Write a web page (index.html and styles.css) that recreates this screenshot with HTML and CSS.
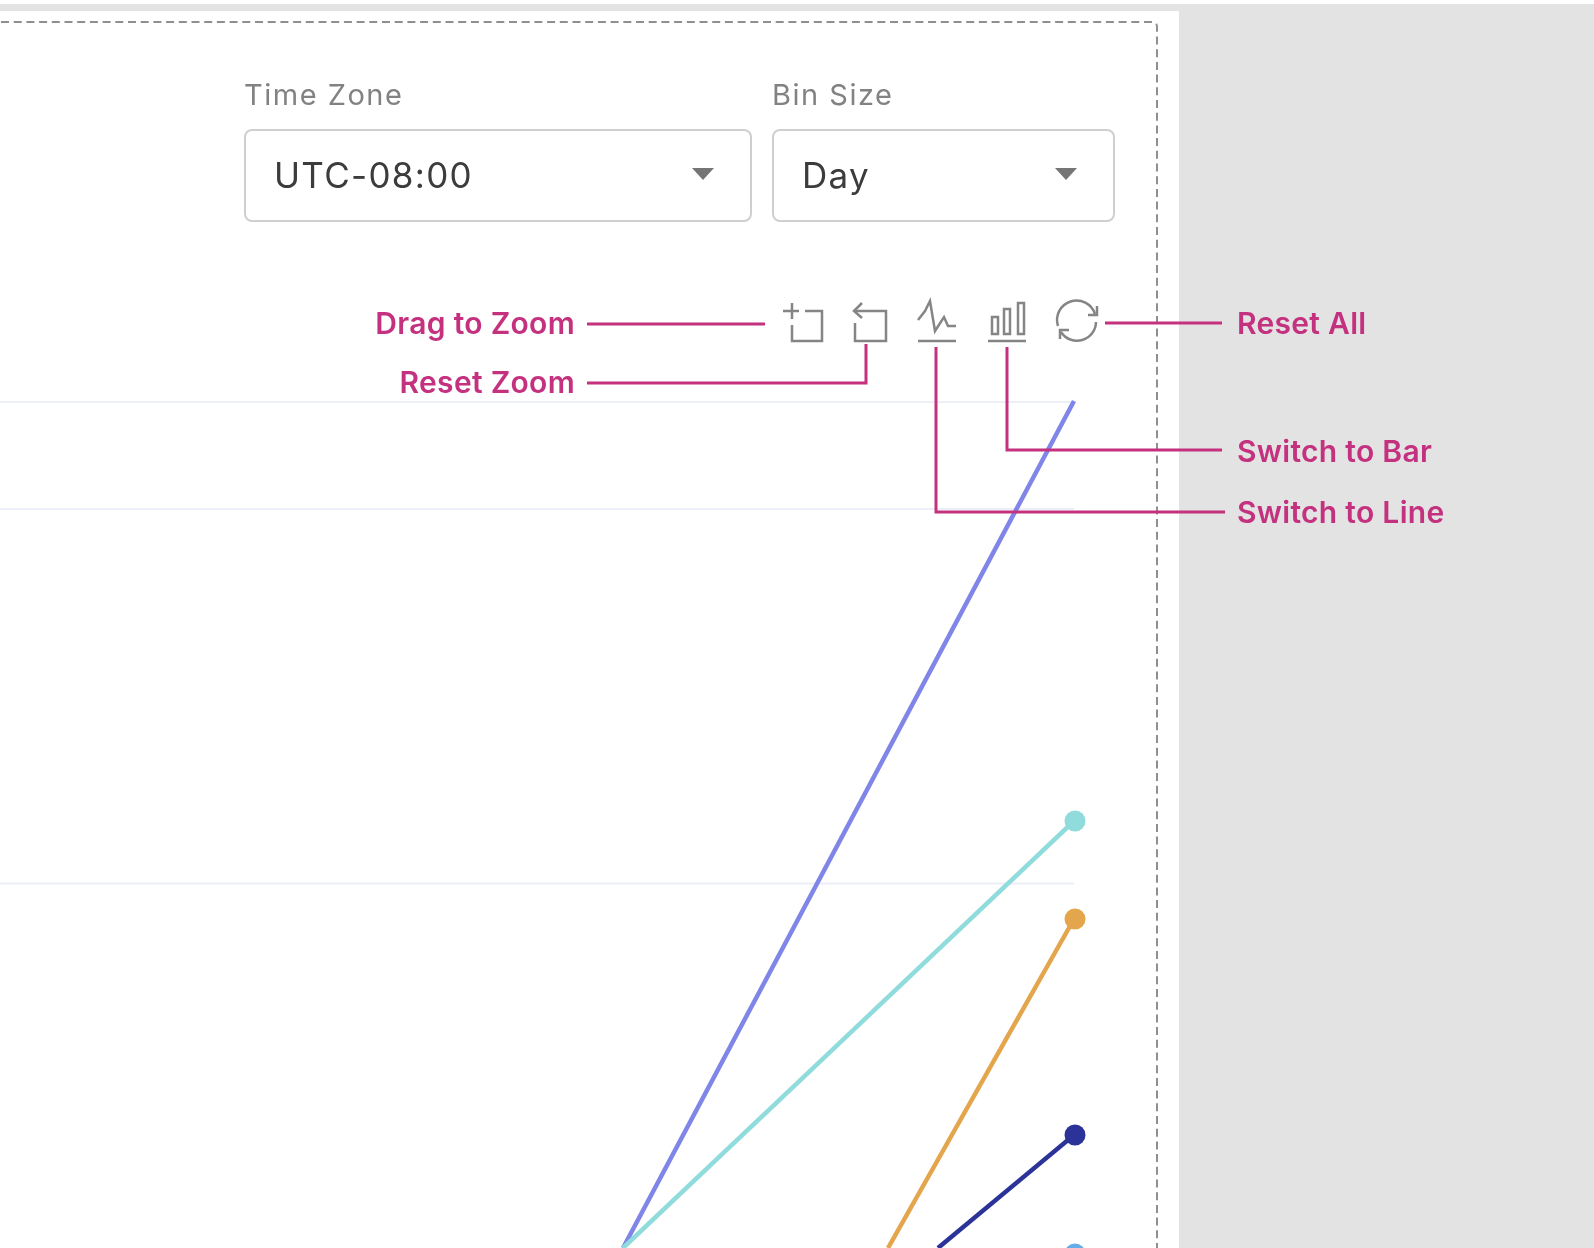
FILE: index.html
```html
<html>
    <head>
        <link rel="stylesheet" href="styles.css">
    </head>

    <body>
        <div class="topbar"></div>
        <div class="page">
            <div class="panel">
                <div class="filters">
                    <div class="field field-zone">
                        <div class="field-label">Time Zone</div>
                        <div class="select"><span>UTC-08:00</span><i class="caret"></i></div>
                    </div>
                    <div class="field field-bin">
                        <div class="field-label">Bin Size</div>
                        <div class="select"><span>Day</span><i class="caret"></i></div>
                    </div>
                </div>
            </div>
            <div class="side"></div>
        </div>

        <!-- chart and callout lines, page coordinates -->
        <svg class="chart" width="1594" height="1248" viewBox="0 0 1594 1248">
            <path class="dashes" d="M1 22H1152Q1157 22 1157 27V1248"/>

            <g stroke="#eceef8" stroke-width="2" fill="none">
                <path d="M0 402H1074"/>
                <path d="M0 509H1074"/>
                <path d="M0 883.500H1074"/>
            </g>

            <g fill="none" stroke-width="4.500">
                <path d="M623 1248L1074 401" stroke="#8085e8"/>
                <path d="M623 1248L1074 821" stroke="#90dbdc"/>
                <path d="M888 1248L1074 919" stroke="#e4a64c"/>
                <path d="M938 1248L1074 1135" stroke="#2b3298"/>
            </g>
            <circle cx="1075" cy="821" r="10.500" fill="#90dbdc"/>
            <circle cx="1075" cy="919" r="10.500" fill="#e4a64c"/>
            <circle cx="1075" cy="1135" r="10.500" fill="#2b3298"/>
            <circle cx="1075" cy="1254" r="10.500" fill="#66ade8"/>

            <g class="icon">
                <path d="M783 311H799M792 303V319"/>
                <path d="M805 311H822V341H792V325"/>
            </g>
            <g class="icon">
                <path d="M855 311H886V341H855V323"/>
                <path d="M862 303L854 311L862 318"/>
            </g>
            <g class="icon">
                <path d="M918 320L925 311L930 301L935 331L944 317L948 326H956"/>
                <path d="M918 341H956"/>
            </g>
            <g class="icon">
                <rect x="992" y="317" width="6" height="17"/>
                <rect x="1004" y="309" width="6" height="25"/>
                <rect x="1018" y="303" width="6" height="31"/>
                <path d="M988 341H1026"/>
            </g>
            <g class="icon">
                <path d="M1058 326A19 19 0 0 1 1095 314"/>
                <path d="M1096 322A19 19 0 0 1 1061 332"/>
                <path d="M1097 306V315H1088M1060 339V330H1069"/>
            </g>

            <g fill="none" stroke="#c4317f" stroke-width="3">
                <path d="M587 324H765"/>
                <path d="M587 383H866V344"/>
                <path d="M936 347V512H1225"/>
                <path d="M1007 347V450H1222"/>
                <path d="M1105 323H1222"/>
            </g>
        </svg>

        <div class="notes">
            <span class="note note-drag">Drag to Zoom</span>
            <span class="note note-reset">Reset Zoom</span>
            <span class="note note-all">Reset All</span>
            <span class="note note-bar">Switch to Bar</span>
            <span class="note note-line">Switch to Line</span>
        </div>
    </body>
</html>
```

FILE: styles.css
```css
html, body {
    margin: 0;
    height: 1248px;
    overflow: hidden;
    background-color: white;
    font-family: Inter, "Liberation Sans", sans-serif;
}
/* the reference is a soft, upscaled capture */
body {
    filter: blur(0.6px);
}
.topbar {
    height: 7px;
    margin-top: 4px;
    background-color: #e3e3e3;
}
.page {
    display: flex;
    height: 1237px;
}
.panel {
    width: 1179px;
    padding: 70px 0 0 244px;
    box-sizing: border-box;
    background-color: white;
}
.side {
    flex: 1;
    background-color: #e3e3e3;
}
.filters {
    display: flex;
    gap: 20px;
}
.field-zone {
    width: 508px;
}
.field-bin {
    width: 343px;
}
.field-label {
    font-size: 29px;
    line-height: 28px;
    letter-spacing: 1.500px;
    color: #828282;
    margin-bottom: 20px;
}
.select {
    height: 93px;
    box-sizing: border-box;
    border: 2px solid #cfcfcf;
    border-radius: 8px;
    padding: 0 36px 2px 28px;
    display: flex;
    align-items: center;
    justify-content: space-between;
    font-size: 35px;
    letter-spacing: 1.300px;
    color: #3c3c3c;
}
.caret {
    width: 0;
    height: 0;
    margin-bottom: 2px;
    border-left: 11px solid transparent;
    border-right: 11px solid transparent;
    border-top: 12px solid #757575;
}
.chart {
    position: absolute;
    left: 0;
    top: 0;
}
.dashes {
    fill: none;
    stroke: #8f8f8f;
    stroke-width: 2;
    stroke-dasharray: 8 4.700;
}
.icon {
    fill: none;
    stroke: #858585;
    stroke-width: 2.500;
}
.note {
    position: absolute;
    font-size: 30px;
    line-height: 36px;
    letter-spacing: 0.300px;
    font-weight: 600;
    color: #c4317f;
    white-space: nowrap;
}
.note-drag {
    right: 1019px;
    top: 305px;
}
.note-reset {
    right: 1019px;
    top: 364px;
}
.note-all {
    left: 1237px;
    top: 305px;
}
.note-bar {
    left: 1237px;
    top: 433px;
}
.note-line {
    left: 1237px;
    top: 494px;
}
```
